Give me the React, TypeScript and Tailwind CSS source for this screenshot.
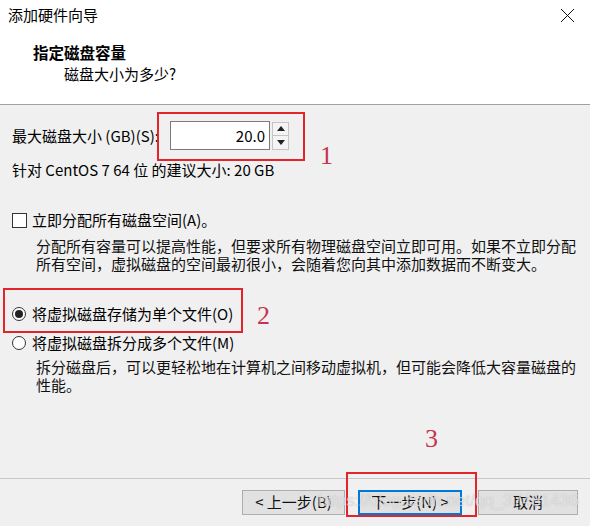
import React from 'react';

const CloseIcon = () => (
  <svg width="15" height="15" viewBox="0 0 15 15" className="block">
    <path d="M1 1 L14 14 M14 1 L1 14" stroke="#111" strokeWidth="1" />
  </svg>
);

const Spinner = () => (
  <div className="ml-[2px] w-[17px] h-[28px] flex flex-col border border-[#c4c4c4] bg-[#f4f4f4]">
    <div className="flex-1 flex items-center justify-center border-b border-[#c4c4c4]">
      <svg width="8" height="5" viewBox="0 0 8 5">
        <path d="M0 5 L4 0 L8 5 Z" fill="#222" />
      </svg>
    </div>
    <div className="flex-1 flex items-center justify-center">
      <svg width="8" height="5" viewBox="0 0 8 5">
        <path d="M0 0 L4 5 L8 0 Z" fill="#222" />
      </svg>
    </div>
  </div>
);

const Radio = ({ checked }: { checked?: boolean }) => (
  <span className="w-[14px] h-[14px] rounded-full border border-[#333] bg-white flex items-center justify-center shrink-0">
    {checked && <span className="w-[8px] h-[8px] rounded-full bg-[#222]" />}
  </span>
);

const Button = ({ label, primary }: { label: string; primary?: boolean }) => (
  <div
    className={`h-[25px] flex items-center justify-center bg-[#e1e1e1] text-[15px] text-[#111] ${
      primary ? 'border-2 border-[#0078d7]' : 'border border-[#adadad]'
    }`}
  >
    {label}
  </div>
);

export default function App() {
  return (
    <div className="relative w-[590px] h-[526px] overflow-hidden bg-[#f0f0f0] flex flex-col font-['Noto_Sans_CJK_SC','Noto_Sans',sans-serif] text-black">
      {/* Header */}
      <div className="h-[105px] shrink-0 bg-white border-b border-[#a0a0a0] flex flex-col">
        <div className="flex items-center justify-between pl-2 pr-[15px] pt-[5px] h-[25px]">
          <span className="text-[15px] leading-[20px]">添加硬件向导</span>
          <CloseIcon />
        </div>
        <div className="ml-[33px] mt-[18px] text-[15.5px] leading-[18px] font-bold">指定磁盘容量</div>
        <div className="ml-[64px] mt-[4px] text-[15px] leading-[18px]">磁盘大小为多少?</div>
      </div>

      {/* Body */}
      <div className="flex-1 flex flex-col pl-3 pt-[16px] text-[15px] leading-[18px]">
        <div className="flex items-center h-[29px]">
          <span className="w-[158px] shrink-0 whitespace-nowrap">最大磁盘大小 (GB)(S):</span>
          <div className="w-[100px] h-[29px] border border-[#7a7a7a] bg-white flex items-center justify-end pr-[4px] text-[15px]">
            20.0
          </div>
          <Spinner />
        </div>
        <div className="mt-[11px]">针对 CentOS 7 64 位 的建议大小: 20 GB</div>

        <div className="mt-[32px] flex items-center gap-[5px]">
          <span className="w-[15px] h-[15px] border border-[#333] bg-white shrink-0" />
          <span>立即分配所有磁盘空间(A)。</span>
        </div>
        <div className="mt-[8px] pl-[24px] text-[#111] whitespace-nowrap">
          <div>分配所有容量可以提高性能，但要求所有物理磁盘空间立即可用。如果不立即分配</div>
          <div>所有空间，虚拟磁盘的空间最初很小，会随着您向其中添加数据而不断变大。</div>
        </div>

        <div className="mt-[32px] flex items-center gap-[6px]">
          <Radio checked />
          <span>将虚拟磁盘存储为单个文件(O)</span>
        </div>
        <div className="mt-[11px] flex items-center gap-[6px]">
          <Radio />
          <span>将虚拟磁盘拆分成多个文件(M)</span>
        </div>
        <div className="mt-[6px] pl-[24px] text-[#111] whitespace-nowrap">
          <div>拆分磁盘后，可以更轻松地在计算机之间移动虚拟机，但可能会降低大容量磁盘的</div>
          <div>性能。</div>
        </div>
      </div>

      {/* Footer */}
      <div className="h-[48px] shrink-0 border-t border-[#c8c8c8] flex justify-end items-start pt-[11px] pr-[12px]">
        <div className="w-[103px]">
          <Button label="< 上一步(B)" />
        </div>
        <div className="w-[104px] ml-[13px]">
          <Button label="下一步(N) >" primary />
        </div>
        <div className="w-[100px] ml-[16px]">
          <Button label="取消" />
        </div>
      </div>

      {/* Annotations */}
      <div className="absolute left-[157px] top-[112px] w-[148px] h-[49px] border-2 border-[#e3252b]" />
      <div className="absolute left-[3px] top-[288px] w-[240px] h-[45px] border-2 border-[#e3252b]" />
      <div className="absolute left-[346px] top-[472px] w-[131px] h-[45px] border-2 border-[#e3252b]" />
      <span className="absolute left-[320px] top-[141px] text-[26px] leading-[30px] text-[#c8334d] font-['Liberation_Serif',serif]">1</span>
      <span className="absolute left-[257px] top-[301px] text-[26px] leading-[30px] text-[#c8334d] font-['Liberation_Serif',serif]">2</span>
      <span className="absolute left-[425px] top-[424px] text-[26px] leading-[30px] text-[#c8334d] font-['Liberation_Serif',serif]">3</span>

      {/* Watermark */}
      <span className="absolute left-[318px] top-[490px] text-[17px] leading-[22px] text-white/60 font-['Liberation_Sans',sans-serif] [text-shadow:0_0_1px_rgba(120,120,120,0.5)]">
        https://blog.csdn.net/qq_37481436
      </span>
    </div>
  );
}
